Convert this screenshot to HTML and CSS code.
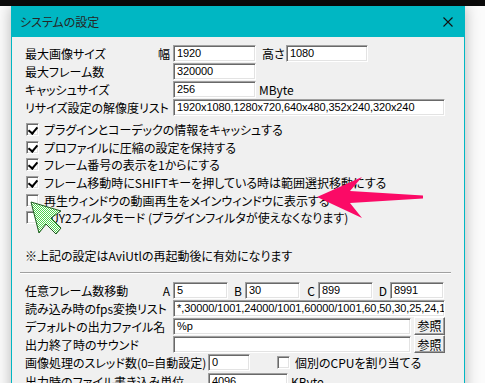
FILE: index.html
```html
<!DOCTYPE html>
<html lang="ja">
<head>
  <meta charset="UTF-8">
  <title>システムの設定</title>
  <link rel="stylesheet" href="styles.css">
</head>
<body>
  <div class="topbar"></div>
  <div class="window">
    <div class="titlebar">
      <span class="title">システムの設定</span>
      <span class="close">
        <svg width="10" height="10" viewBox="0 0 10 10"><path d="M0.5 0.5 L9.5 9.5 M9.5 0.5 L0.5 9.5" stroke="#111" stroke-width="1.1"/></svg>
      </span>
    </div>

    <div class="content">
      <div class="row">
        <div class="label"><span>最大画像サイズ</span><span class="suffix">幅</span></div>
        <div class="edit w83">1920</div>
        <span class="mid-label">高さ</span>
        <div class="edit w82">1080</div>
      </div>
      <div class="row">
        <div class="label"><span>最大フレーム数</span></div>
        <div class="edit w83">320000</div>
      </div>
      <div class="row">
        <div class="label"><span>キャッシュサイズ</span></div>
        <div class="edit w83">256</div>
        <span class="unit">MByte</span>
      </div>
      <div class="row">
        <div class="label"><span>リサイズ設定の解像度リスト</span></div>
        <div class="edit w272">1920x1080,1280x720,640x480,352x240,320x240</div>
      </div>

      <div class="checks">
        <div class="check"><span class="box on"></span>プラグインとコーデックの情報をキャッシュする</div>
        <div class="check"><span class="box on"></span>プロファイルに圧縮の設定を保持する</div>
        <div class="check"><span class="box on"></span>フレーム番号の表示を1からにする</div>
        <div class="check"><span class="box on"></span>フレーム移動時にSHIFTキーを押している時は範囲選択移動にする</div>
        <div class="check"><span class="box"></span>再生ウィンドウの動画再生をメインウィンドウに表示する</div>
        <div class="check"><span class="box"></span>YUY2フィルタモード (プラグインフィルタが使えなくなります)</div>
      </div>

      <div class="note">※上記の設定はAviUtlの再起動後に有効になります</div>
      <div class="separator"></div>

      <div class="lower">
        <div class="row">
          <div class="label"><span>任意フレーム数移動</span><span class="suffix">A</span></div>
          <div class="edit w55">5</div>
          <span class="key kb">B</span>
          <div class="edit w55">30</div>
          <span class="key kc">C</span>
          <div class="edit w55">899</div>
          <span class="key kd">D</span>
          <div class="edit w54">8991</div>
        </div>
        <div class="row">
          <div class="label"><span>読み込み時のfps変換リスト</span></div>
          <div class="edit w272">*,30000/1001,24000/1001,60000/1001,60,50,30,25,24,15</div>
        </div>
        <div class="row">
          <div class="label"><span>デフォルトの出力ファイル名</span></div>
          <div class="edit w238">%p</div>
          <button class="btn">参照</button>
        </div>
        <div class="row">
          <div class="label"><span>出力終了時のサウンド</span></div>
          <div class="edit w238"></div>
          <button class="btn">参照</button>
        </div>
        <div class="row">
          <div class="label wide"><span>画像処理のスレッド数(0=自動設定)</span></div>
          <div class="edit w42">0</div>
          <div class="check inline"><span class="box"></span>個別のCPUを割り当てる</div>
        </div>
        <div class="row">
          <div class="label wide"><span>出力時のファイル書き込み単位</span></div>
          <div class="edit w80">4096</div>
          <span class="unit">KByte</span>
        </div>
      </div>
    </div>
  </div>

  <svg class="overlay" width="485" height="383" viewBox="0 0 485 383">
    <defs>
      <pattern id="checker" width="2" height="2" patternUnits="userSpaceOnUse">
        <rect width="2" height="2" fill="#ffffff"/>
        <rect width="1" height="1" fill="#4fd24f"/>
        <rect x="1" y="1" width="1" height="1" fill="#4fd24f"/>
      </pattern>
    </defs>
    <polygon points="317,197 362,177 350,191 423,195.5 423,198.5 350,203 362,218" fill="#fb0a66"/>
    <polygon points="31,202 61,211 51,218 61,228 56,234 46,224 39,233" fill="url(#checker)" stroke="#1d5a1d" stroke-width="1" stroke-linejoin="round"/>
  </svg>
</body>
</html>
```

FILE: styles.css
```css
* {
  margin: 0;
  padding: 0;
  box-sizing: border-box;
}

body {
  width: 485px;
  height: 383px;
  overflow: hidden;
  background: #fbfbfb;
  font-family: "Noto Sans CJK JP", "Liberation Sans", sans-serif;
  font-size: 12px;
  font-feature-settings: "palt";
  color: #000000;
  position: relative;
}

.topbar {
  height: 6px;
  background: #0a0a0a;
}

.window {
  margin-left: 11px;
  width: 454px;
  height: 400px;
  background: #f0f0f0;
  border-left: 1px solid #00b7c3;
  border-right: 1px solid #00b7c3;
  box-shadow: 0 0 14px rgba(0, 0, 0, 0.28);
}

.titlebar {
  height: 31px;
  background: #00b7c3;
  display: flex;
  align-items: center;
  justify-content: space-between;
  padding: 0 11px 0 8px;
}

.title {
  color: #262626;
  font-size: 12px;
}

.close {
  display: flex;
}

.content {
  padding: 8px 0 0 13px;
}

.row {
  height: 18px;
  display: flex;
  align-items: flex-start;
}

.label {
  flex: 0 0 148px;
  display: flex;
  justify-content: space-between;
  line-height: 17px;
  white-space: nowrap;
}

.label.wide {
  flex-basis: 183px;
}

.suffix {
  margin-right: 3px;
}

.edit {
  height: 17px;
  background: #ffffff;
  border: 1px solid;
  border-color: #a0a0a0 #ffffff #ffffff #a0a0a0;
  box-shadow: inset 1px 1px #696969, inset -1px -1px #e3e3e3;
  padding-left: 3px;
  font-family: "Liberation Sans", "Noto Sans CJK JP", sans-serif;
  font-size: 11px;
  letter-spacing: -0.1px;
  line-height: 15px;
  white-space: nowrap;
  overflow: hidden;
}

.w83 { width: 83px; }
.w82 { width: 82px; }
.w272 { width: 272px; }
.w55 { width: 55px; }
.w54 { width: 54px; }
.w238 { width: 238px; }
.w42 { width: 42px; }
.w80 { width: 80px; }

.mid-label {
  width: 30px;
  padding-left: 6px;
  line-height: 17px;
}

.unit {
  margin-left: 3px;
  line-height: 17px;
}

.checks {
  margin-top: 4px;
}

.check {
  height: 17.6px;
  display: flex;
  align-items: center;
  padding-left: 1px;
  white-space: nowrap;
}

.box {
  width: 13px;
  height: 13px;
  margin-right: 5px;
  background: #ffffff;
  border: 1px solid;
  border-color: #a0a0a0 #ffffff #ffffff #a0a0a0;
  box-shadow: inset 1px 1px #696969, inset -1px -1px #e3e3e3;
  position: relative;
}

.box.on::after {
  content: "";
  position: absolute;
  left: 3px;
  top: 1px;
  width: 4px;
  height: 7px;
  border: solid #000000;
  border-width: 0 2px 2px 0;
  transform: rotate(40deg);
}

.note {
  margin-top: 20px;
  height: 18px;
  line-height: 18px;
}

.separator {
  margin: 7px 0 0 -5px;
  width: 431px;
  height: 2px;
  border-top: 1px solid #a0a0a0;
  border-bottom: 1px solid #ffffff;
}

.lower {
  margin-top: 8px;
}

.lower .row {
  height: 18.2px;
}

.key {
  line-height: 17px;
  text-align: right;
  padding-right: 3px;
}

.kb { width: 17px; }
.kc { width: 18px; }
.kd { width: 17px; }

.btn {
  width: 31px;
  height: 18px;
  margin-left: 3px;
  margin-top: -1px;
  font-family: inherit;
  font-size: 12px;
  background: #f0f0f0;
  border: 1px solid;
  border-color: #ffffff #696969 #696969 #ffffff;
  box-shadow: inset -1px -1px #a0a0a0;
  line-height: 15px;
}

.check.inline {
  margin-left: 26px;
  height: 17px;
}

.overlay {
  position: absolute;
  left: 0;
  top: 0;
  pointer-events: none;
}
```
